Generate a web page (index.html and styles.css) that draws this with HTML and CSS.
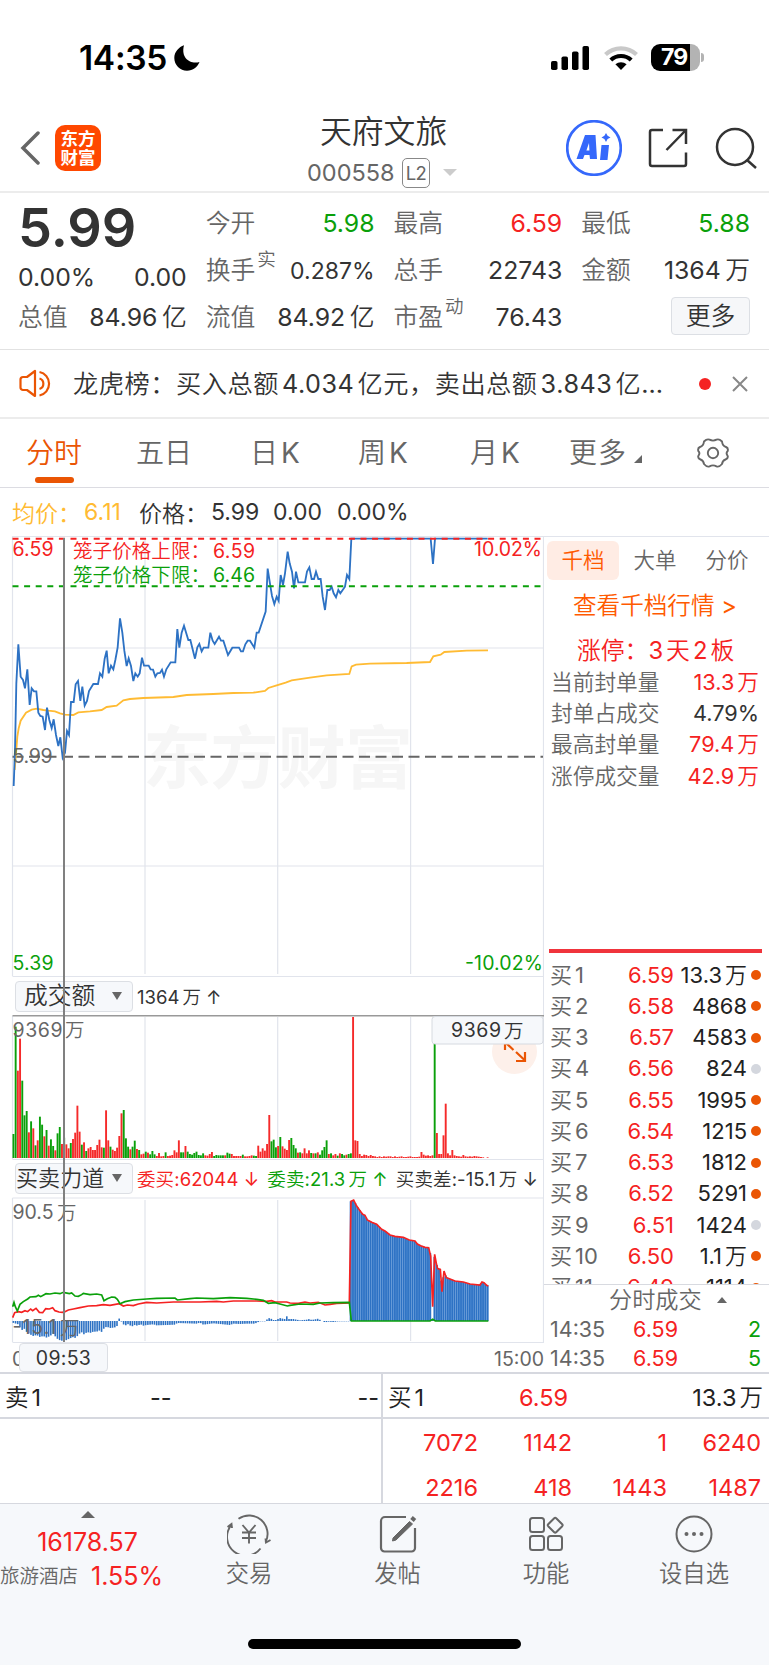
FILE: index.html
```html
<!DOCTYPE html>
<html lang="zh-CN">
<head>
<meta charset="utf-8">
<title>天府文旅 000558</title>
<link rel="stylesheet" href="styles.css">
</head>
<body>
<div class="phone">
  <div class="status">
    <span class="clock">14:35</span>
    <svg class="moon" width="26" height="26" viewBox="0 0 26 26"><path d="M10 0.3C5 2 .3 6.800.3 13 .3 20 6 25.700 13 25.700c6 0 10.500-3.500 12.500-8.700C17 19.500 6.500 14 10 .3z"/></svg>
    <svg class="signal" width="39" height="24" viewBox="0 0 39 24"><rect x="0" y="15" width="6.500" height="9" rx="1.800"/><rect x="10.500" y="10.500" width="6.500" height="13.500" rx="1.800"/><rect x="21" y="5.500" width="6.500" height="18.500" rx="1.800"/><rect x="31.500" y="0" width="6.500" height="24" rx="1.800"/></svg>
    <svg class="wifi" width="34" height="24" viewBox="0 0 34 24"><path d="M1.500 8.500a22.500 22.500 0 0 1 31 0" fill="none" stroke="#c9c9c9" stroke-width="4.200"/><path d="M6.800 14a15 15 0 0 1 20.400 0" fill="none" stroke="#000" stroke-width="4.200"/><path d="M17 24l-5.600-5.700a8.500 8.500 0 0 1 11.200 0z"/></svg>
    <div class="battery"><span>79</span></div><i class="nub"></i>
  </div>

  <header class="header">
    <svg class="back" width="20" height="34" viewBox="0 0 20 34"><path d="M18 2L3 17l15 15" fill="none" stroke="#666" stroke-width="3.500" stroke-linecap="round"/></svg>
    <div class="logo">东方<br>财富</div>
    <div class="title">
      <h1>天府文旅</h1>
      <p><span>000558</span><em>L2</em><i></i></p>
    </div>
    <svg class="ai" width="56" height="56" viewBox="0 0 56 56"><circle cx="28" cy="28" r="26.800" fill="none" stroke="#3568fb" stroke-width="2.700"/><path fill="#3568fb" fill-rule="evenodd" d="M19 15h10.500l1.500 24h-7l-.5-4h-5L17 39h-6.500zM23 23l-2.600 7.500h3zM35.500 25H43l-1.500 15h-7.500zM40 13l1.600 2.800L44.500 17.500l-2.900 1.600L40 22l-1.600-2.900-2.900-1.600 2.900-1.700z"/></svg>
    <svg class="share" width="40" height="40" viewBox="0 0 40 40" fill="none" stroke="#333" stroke-width="2.500"><path d="M15 2H4a2 2 0 0 0-2 2v32a2 2 0 0 0 2 2h32a2 2 0 0 0 2-2V24.500M24.500 2H38v14M37 3L18.500 22"/></svg>
    <svg class="search" width="42" height="42" viewBox="0 0 42 42" fill="none" stroke="#333" stroke-width="2.500"><circle cx="20" cy="20" r="18"/><path d="M32 33l9 8"/></svg>
  </header>

  <section class="quote">
    <div class="col first">
      <div class="price">5.99</div>
      <div class="row up"><span>0.00%</span><span>0.00</span></div>
      <div class="row"><label>总值</label><span>84.96<u>亿</u></span></div>
    </div>
    <div class="col">
      <div class="row"><label>今开</label><span class="green">5.98</span></div>
      <div class="row"><label>换手<sup>实</sup></label><span class="narrow">0.287%</span></div>
      <div class="row"><label>流值</label><span>84.92<u>亿</u></span></div>
    </div>
    <div class="col">
      <div class="row"><label>最高</label><span class="red">6.59</span></div>
      <div class="row"><label>总手</label><span>22743</span></div>
      <div class="row"><label>市盈<sup>动</sup></label><span>76.43</span></div>
    </div>
    <div class="col">
      <div class="row"><label>最低</label><span class="green">5.88</span></div>
      <div class="row"><label>金额</label><span>1364<u>万</u></span></div>
      <div class="row end"><button>更多</button></div>
    </div>
  </section>

  <section class="news">
    <svg width="34" height="30" viewBox="0 0 34 30" fill="none" stroke="#ea5504" stroke-width="2.200" stroke-linejoin="round"><path d="M4 8h4l8-6v25l-8-6H4a2.500 2.500 0 0 1-2.500-2.500v-8A2.500 2.500 0 0 1 4 8z"/><path d="M20.500 9.500a5.500 5.500 0 0 1 0 10.500M20.500 3a12 12 0 0 1 0 23.500"/></svg>
    <p>龙虎榜：买入总额<u></u>4.034<u>亿</u>元，卖出总额<u></u>3.843<u>亿</u>…</p>
    <i class="dot"></i>
    <svg class="close" width="16" height="16" viewBox="0 0 16 16"><path d="M1 1l14 14M15 1L1 15" stroke="#888" stroke-width="2"/></svg>
  </section>

  <nav class="tabs">
    <a class="on">分时</a><a>五日</a><a>日<u>K</u></a><a>周<u>K</u></a><a>月<u>K</u></a><a class="more">更多<i></i></a>
    <svg width="32" height="30" viewBox="-16 -15 32 30" fill="none" stroke="#666" stroke-width="1.900" stroke-linejoin="round"><circle r="5.200"/><path d="M-9-11.500Q-6-14.500-3.500-13.300Q0-11.400 3.500-13.300Q6-14.500 9-11.500Q9.500-7 13-6Q15.500-5 14.700-2Q12.500 0 14.700 3Q15.300 5.500 12.500 6.500Q9.500 7.500 9 11Q6 14.500 3.500 13.300Q0 11.400-3.500 13.300Q-6 14.500-9 11Q-9.500 7.500-12.500 6.500Q-15.300 5.500-14.700 3Q-12.500 0-14.700-2Q-15.500-5-13-6Q-9.500-7-9-11.500z"/></svg>
  </nav>

  <div class="legend"><span class="avg">均价：</span><span class="avg v1">6.11</span><span class="v2">价格：</span><span class="v3">5.99</span><span class="v4">0.00</span><span>0.00%</span></div>

  <main class="market">
    <div class="charts">
      <svg class="c-price" width="544" height="441" viewBox="0 536 544 441">
        <text class="mark" x="143" y="783" textLength="270">东方财富</text>
        <path class="grid" d="M12.500 536.500H544M12.500 648H544M12.500 866H544M12.500 976.500H544M12.500 536V976M145 539V974M277.700 539V974M410.600 539V974M543.500 536V977"/>
        <path d="M12.500 756.800H543" stroke="#666" stroke-width="2" stroke-dasharray="11 5.500"/>
        <g transform="translate(0 400) scale(.33333)" fill="none">
          <path stroke="#ffbb33" stroke-width="5.500" d="M44 1110L48 1060 52 1010 56 985 62 962 78 938 95 929 110 926 130 930 145 932 165 934 180 940 195 944 220 945 235 937 270 934 305 930 320 921 350 917 370 901 390 897 430 894 520 891 560 885 640 882 700 879 760 878 795 873 805 864 830 856 857 848 875 841 930 833 980 826 1048 822 1055 799 1068 794 1110 791 1220 789 1290 786 1300 769 1322 764 1333 756 1400 752 1464 751"/>
          <path stroke="#2d72c4" stroke-width="5.500" d="M41 1158L45 1050 49 850 55 733 62 830 69 840 75 865 82 808 89 915 95 865 102 874 109 874 115 938 121 948 128 950 135 990 141 923 148 960 155 984 161 958 168 1005 175 1038 181 1012 188 1073 195 1058 201 993 207 1005 213 906 221 906 227 853 234 843 241 903 247 860 254 917 261 903 267 873 280 852 294 852 300 820 307 830 314 776 320 752 326 820 333 797 340 808 346 780 353 742 360 655 367 698 373 752 380 798 386 775 393 798 400 843 406 820 413 830 419 820 426 773 432 797 446 797 452 808 459 809 466 830 472 820 480 819 486 809 492 830 499 808 512 787 526 787 532 687 538 743 545 698 552 677 565 720 571 720 585 776 592 742 598 732 605 754 611 743 625 743 631 698 638 722 644 732 657 710 663 722 670 722 684 765 697 743 717 743 723 754 729 754 736 733 743 722 750 722 763 743 770 698 776 698 797 635 803 506 809 545 816 588 823 612 830 590 836 603 842 525 849 555 855 520 863 455 869 490 876 515 882 565 888 515 895 547 915 547 921 515 928 502 935 537 942 537 948 515 955 537 962 537 968 590 975 630 982 570 989 570 995 560 1001 580 1008 592 1015 570 1021 580 1035 560 1041 525 1048 537 1054 416 1292 416 1299 492 1305 416 1463 416"/>
        </g>
        <path d="M12.500 538.800H543" stroke="#f52222" stroke-width="2" stroke-dasharray="6 5.600"/>
        <path d="M12.500 586.300H543" stroke="#0aa00a" stroke-width="2" stroke-dasharray="6 5.600"/>
        <g class="lab">
          <text class="r" x="12.500" y="556" textLength="41">6.59</text>
          <text class="r" x="73" y="557.500" textLength="137">笼子价格上限：</text><text class="r" x="213" y="558" textLength="42">6.59</text>
          <text class="g" x="73" y="582" textLength="137">笼子价格下限：</text><text class="g" x="213" y="582" textLength="42">6.46</text>
          <text class="r" x="474" y="556" textLength="68">10.02%</text>
          <text x="12.500" y="763" textLength="40">5.99</text>
          <text class="g" x="12.500" y="970" textLength="41">5.39</text>
          <text class="g" x="465" y="970" textLength="78">-10.02%</text>
        </g>
      </svg>
      <div class="bar bar1"><span class="pick">成交额<i></i></span><span class="dark">1364<u>万</u> ↑</span></div>
      <svg class="c-vol" width="544" height="145" viewBox="0 1015 544 145">
        <path class="grid" d="M12.500 1016V1159M145 1017V1158M277.700 1017V1158M410.600 1017V1158M543.500 1015V1160M12.500 1159.500H544"/>
        <path d="M12.500 1015.800H544" stroke="#999" stroke-width="1.600"/>
        <g id="volume"></g>
        <circle cx="514.500" cy="1051.500" r="22.500" fill="#fdf0ea"/>
        <path d="M505 1050v-8h8M505.500 1042.500l8 7.500M516 1052l8.500 8M525 1052v9h-9" fill="none" stroke="#ea5504" stroke-width="2.200"/>
        <g class="lab"><text x="12.500" y="1036.500" textLength="50">9369</text><text x="65" y="1037" font-size="18">万</text></g>
        <rect x="432" y="1016.500" width="111" height="27.500" rx="3" fill="#f6f8fb" stroke="#d6dae0"/>
        <g class="lab"><text class="d" x="451" y="1037" textLength="50">9369</text><text class="d" x="504" y="1038" font-size="18">万</text></g>
      </svg>
      <div class="bar bar2"><span class="pick tight">买卖力道<i></i></span><span class="red">委买:62044 ↓</span><span class="green">委卖:21.3<u>万</u> ↑</span><span class="dark">买卖差:-15.1<u>万</u> ↓</span></div>
      <svg class="c-force" width="544" height="146" viewBox="0 1197 544 146">
        <path class="grid" d="M12.500 1198V1342M145 1200V1341M277.700 1200V1341M410.600 1200V1341M543.500 1197V1343M12.500 1198H544M12.500 1342.500H544"/>
        <g id="force"></g>
        <g transform="translate(0 1160) scale(.33333)" fill="none" stroke-width="5">
          <path stroke="#f52222" d="M38 473L44 458 55 455 65 457 75 452 83 455 92 447 98 452 108 445 118 457 128 458 137 446 148 447 158 443 165 452 177 456 187 457 195 455 205 450 220 447 240 443 265 438 290 437 310 434 330 436 358 431 370 438 382 435 400 437 415 432 440 427 470 429 520 426 600 426 650 424 670 426 700 423 770 423 800 424 815 422 825 426 860 426 870 429 895 430 915 426 930 429 955 427 975 435 990 433 1010 430 1048 429 1053 124 1061 120 1070 138 1080 152 1088 163 1095 166 1102 180 1115 187 1130 193 1145 208 1155 213 1170 225 1185 229 1210 232 1228 240 1245 243 1252 252 1262 257 1275 262 1286 263 1292 288 1298 440 1304 283 1309 310 1313 326 1321 328 1326 395 1332 333 1339 353 1348 356 1365 363 1390 366 1410 372 1440 375 1446 366 1452 368 1460 376 1465 378"/>
          <path stroke="#0aa00a" d="M38 440L42 427 46 440 52 453 60 433 70 425 83 417 90 411 108 410 115 406 122 410 138 401 150 402 165 399 180 401 190 397 208 401 215 399 225 408 235 409 245 404 250 400 270 404 290 402 305 405 312 422 322 416 335 411 345 412 352 418 360 431 375 425 400 420 440 417 470 415 525 414 532 420 570 416 590 414 640 416 690 413 740 415 770 418 790 421 805 430 825 428 840 432 862 438 870 436 900 432 940 433 960 429 1000 428 1048 427 1054 483 1290 483 1298 478 1306 483 1465 483"/>
        </g>
        <g class="lab"><text x="12.500" y="1219" textLength="41">90.5</text><text x="57" y="1219.500" font-size="18">万</text><text x="12.500" y="1334" textLength="44">-15.1</text><text x="60" y="1335" font-size="18">万</text></g>
      </svg>
      <div class="axis"><span>09:30</span><span>15:00</span><b>09:53</b></div>
      <i class="cross"></i>
    </div>

    <aside class="side">
      <div class="stabs"><span class="on">千档</span><span>大单</span><span>分价</span></div>
      <div class="link">查看千档行情 &gt;</div>
      <div class="limit">涨停：3<u>天</u><u></u>2<u>板</u></div>
      <div class="stats">
        <div><label>当前封单量</label><span class="red">13.3<u>万</u></span></div>
        <div><label>封单占成交</label><span>4.79%</span></div>
        <div><label>最高封单量</label><span class="red">79.4<u>万</u></span></div>
        <div><label>涨停成交量</label><span class="red">42.9<u>万</u></span></div>
      </div>
      <div class="book">
        <div><label>买<u>1</u></label><span>6.59</span><span>13.3<u>万</u></span><i></i></div>
        <div><label>买<u>2</u></label><span>6.58</span><span>4868</span><i></i></div>
        <div><label>买<u>3</u></label><span>6.57</span><span>4583</span><i></i></div>
        <div><label>买<u>4</u></label><span>6.56</span><span>824</span><i class="off"></i></div>
        <div><label>买<u>5</u></label><span>6.55</span><span>1995</span><i></i></div>
        <div><label>买<u>6</u></label><span>6.54</span><span>1215</span><i></i></div>
        <div><label>买<u>7</u></label><span>6.53</span><span>1812</span><i></i></div>
        <div><label>买<u>8</u></label><span>6.52</span><span>5291</span><i></i></div>
        <div><label>买<u>9</u></label><span>6.51</span><span>1424</span><i class="off"></i></div>
        <div><label>买<u>10</u></label><span>6.50</span><span>1.1<u>万</u></span><i></i></div>
        <div><label>买<u>11</u></label><span>6.49</span><span>1114</span><i></i></div>
      </div>
      <div class="ticks">
        <h3>分时成交<i></i></h3>
        <div><label>14:35</label><span>6.59</span><b>2</b></div>
        <div><label>14:35</label><span>6.59</span><b>5</b></div>
      </div>
    </aside>
  </main>

  <section class="queue">
    <div class="sell"><div class="head"><span>卖<u>1</u></span><span>--</span><span>--</span></div></div>
    <div class="buy">
      <div class="head"><span>买<u>1</u></span><span class="red">6.59</span><span>13.3<u>万</u></span></div>
      <div class="lots"><span>7072</span><span>1142</span><span>1</span><span>6240</span><span>2216</span><span>418</span><span>1443</span><span>1487</span></div>
    </div>
  </section>

  <footer class="footer">
    <div class="sector"><i></i><strong>16178.57</strong><p><span>旅游酒店</span><b>1.55%</b></p></div>
    <div class="item"><svg width="44" height="40" viewBox="-22 -20 44 40" fill="none" stroke="#666" stroke-width="1.900"><path d="M-10.500-15.200A18.500 18.500 0 0 1 16.500 8.500M11.500 14.500A18.500 18.500 0 0 1-18-8.500M-21.500-7l4-3 .5 4M21.500 6l-4.500 2.500-.5-4M-6.500-9L0-1.500 6.500-9M0-1.500V9.500M-7-1.500H7M-7 4H7"/></svg><span>交易</span></div>
    <div class="item"><svg width="40" height="40" viewBox="0 0 40 40" fill="none" stroke="#666" stroke-width="2.200"><path d="M28 3H7a4 4 0 0 0-4 4v27a3.500 3.500 0 0 0 3.500 3.500h27A3.500 3.500 0 0 0 37 34V14"/><path d="M31.500 7.500l3 2.500L18 26l-3.500 1L15 24z" fill="#666" stroke-width="1"/><path d="M34 6.500l2.500-3" stroke-width="4.500"/></svg><span>发帖</span></div>
    <div class="item"><svg width="38" height="38" viewBox="0 0 38 38" fill="none" stroke="#666" stroke-width="2"><rect x="3" y="3" width="14" height="14" rx="2.500"/><rect x="3" y="21" width="14" height="14" rx="2.500"/><rect x="21" y="21" width="14" height="14" rx="2.500"/><path d="M27.200 3.200a1.500 1.500 0 0 1 2 0l6 6a1.500 1.500 0 0 1 0 2l-6 6a1.500 1.500 0 0 1-2 0l-6-6a1.500 1.500 0 0 1 0-2z"/></svg><span>功能</span></div>
    <div class="item"><svg width="38" height="38" viewBox="0 0 38 38"><circle cx="19" cy="19" r="17.500" fill="none" stroke="#666" stroke-width="2"/><g fill="#666"><circle cx="11.500" cy="19" r="2"/><circle cx="19" cy="19" r="2"/><circle cx="26.500" cy="19" r="2"/></g></svg><span>设自选</span></div>
    <div class="home"></div>
  </footer>
</div>
<script src="chart.js"></script>
</body>
</html>
```

FILE: styles.css
```css
* { box-sizing: border-box; margin: 0; padding: 0; }
body { background: #fff; color: #333; font-family: Inter, "Noto Sans CJK SC DemiLight", "Noto Sans CJK SC", sans-serif; font-weight: 400; width: 769px; }
.phone { width: 769px; height: 1665px; display: flex; flex-direction: column; overflow: hidden; }
i, em { font-style: normal; }
u { text-decoration: none; margin-left: 3px; }
b { font-weight: inherit; }
.red { color: #f52222; }
.green { color: #0aa00a; }
.dark { color: #333; }
svg { display: block; flex: none; }

.status { height: 108px; padding: 7px 65px 0 79px; display: flex; align-items: center; color: #000; }
.clock { font-size: 33.500px; font-weight: 600; width: 95px; letter-spacing: -.3px; white-space: nowrap; }
.signal { margin-left: 351px; }
.wifi { margin-left: 14px; }
.battery { margin-left: 13px; width: 49px; height: 27px; border-radius: 9px; background: linear-gradient(90deg, #000 79%, #b3b3b3 79%); color: #fff; font-size: 23px; font-weight: 700; line-height: 27px; padding-left: 10px; letter-spacing: -1px; }
.nub { width: 3px; height: 9px; margin-left: 1px; border-radius: 0 3px 3px 0; background: #b3b3b3; }

.header { height: 85px; border-bottom: 2px solid #ececec; display: flex; align-items: center; padding: 0 12px 4px 20px; }
.logo { margin-left: 15px; width: 46px; height: 46px; border-radius: 10px; background: #ff4800; color: #fff; font-family: "Noto Sans CJK SC", sans-serif; font-weight: 700; font-size: 17.500px; line-height: 19px; text-align: center; padding-top: 3px; }
.title { margin-left: 206px; width: 151px; padding-top: 4px; }
.title h1 { font-size: 31.800px; font-weight: inherit; line-height: 42px; margin-left: 13px; white-space: nowrap; }
.title p { display: flex; align-items: center; color: #666; font-size: 23.500px; line-height: 32px; margin-top: 4px; height: 32px; }
.title p span { width: 95px; }
.title em { width: 28px; height: 30px; border: 1.500px solid #888; border-radius: 5px; font-size: 18.500px; line-height: 28px; text-align: center; letter-spacing: -.5px; }
.title i { margin-left: 13px; border: 7px solid transparent; border-top: 7px solid #ccc; border-bottom: 0; }
.ai { margin-left: 108px; }
.share { margin-left: 26px; }
.search { margin-left: 27px; }

.quote { height: 157px; border-bottom: 1.500px solid #e2e2e2; padding: 6px 19px 0 18px; display: grid; grid-template-columns: repeat(4, 1fr); column-gap: 19px; font-size: 24.800px; }
.quote u { margin-left: 4.500px; }
.col .row { height: 47px; display: flex; justify-content: space-between; align-items: center; line-height: 30px; white-space: nowrap; }
.col label { color: #666; }
.col sup { font-size: 18.500px; vertical-align: 13px; line-height: 0; margin-left: 2px; }
.price { font-size: 54px; font-weight: 600; line-height: 57px; height: 54px; letter-spacing: 0; }
.first .up { height: 40px; padding-top: 8px; padding-bottom: 0; }
.narrow { font-size: 23px; padding-top: 3px; }
.col .end { justify-content: flex-end; }
.quote button { width: 79px; height: 38px; border: 1.500px solid #dcdfe4; border-radius: 4px; background: #f6f7f9; font: inherit; color: #333; margin-top: -2px; }

.news { height: 69px; border-bottom: 2px solid #ececec; display: flex; align-items: center; padding: 0 21px 0 19px; }
.news p { margin-left: 20px; width: 627px; font-size: 25.200px; letter-spacing: .55px; white-space: nowrap; padding-bottom: 3px; }
.dot { width: 12px; height: 12px; border-radius: 50%; background: #f52222; }
.close { margin-left: 21px; }

.tabs { height: 69px; border-bottom: 1.500px solid #dcdce2; position: relative; display: flex; align-items: center; font-size: 28px; color: #666; padding: 0 0 0 26px; }
.tabs a { height: 68px; line-height: 69px; position: relative; white-space: nowrap; width: 110px; }
.tabs a:nth-child(2) { width: 114px; }
.tabs a:nth-child(3) { width: 108px; }
.tabs a:nth-child(4) { width: 112px; }
.tabs a:nth-child(5) { width: 99px; }
.tabs a:nth-child(6) { width: 128px; letter-spacing: 1px; }
.tabs .on { color: #ea5504; }
.tabs .on::after { content: ""; position: absolute; left: 9px; bottom: 4px; width: 39px; height: 6px; border-radius: 3px; background: #ea5504; }
.more i { display: inline-block; margin-left: 7px; border-left: 8px solid transparent; border-bottom: 8px solid #666; }

.legend { height: 48px; padding-left: 12px; display: flex; align-items: center; font-size: 23px; white-space: nowrap; }
.legend .avg { color: #ffbb33; width: 72px; }
.legend .v1 { width: 55px; }
.legend .v2 { width: 72px; }
.legend .v3 { width: 62px; }
.legend .v4 { width: 64px; }

.market { height: 836px; display: grid; grid-template-columns: 544px 225px; }
.charts { position: relative; display: flex; flex-direction: column; }
.grid { fill: none; stroke: #e1e4ec; stroke-width: 1.200; }
.mark { font-family: "Noto Sans CJK SC", sans-serif; font-size: 68px; font-weight: 700; fill: #f6f6f6; }
.lab text { fill: #666; font-size: 19.500px; }
.lab .r { fill: #f52222; }
.lab .g { fill: #0aa00a; }
.lab .d { fill: #333; }
.bar { display: flex; align-items: center; padding-left: 15px; font-size: 18.500px; white-space: nowrap; border-right: 1px solid #e1e4ec; }
.bar1 { height: 38px; }
.bar2 { height: 37px; padding-bottom: 1px; letter-spacing: .1px; }
.pick { width: 118px; height: 31px; margin-right: 4px; border: 1.500px solid #dcdfe4; border-radius: 4px; background: #f6f8fb; display: flex; align-items: center; justify-content: space-between; padding: 0 10px 0 8px; font-size: 23.800px; line-height: 28px; }
.tight { padding-left: 0; font-size: 22px; }
.pick i { border: 5px solid transparent; border-top: 8px solid #666; border-bottom: 0; }
.bar2 .green { margin: 0 8px; }
.axis { position: relative; height: 29px; display: flex; justify-content: space-between; align-items: center; padding-left: 12px; font-size: 19.500px; color: #666; padding-top: 3px; }
.axis b { position: absolute; left: 19px; top: 0; width: 89px; height: 29px; border: 1.500px solid #dcdfe4; border-radius: 4px; background: #f6f8fb; color: #333; text-align: center; line-height: 28px; letter-spacing: .3px; }
.cross { position: absolute; left: 63px; top: 2px; width: 2px; height: 804px; background: #808080; }

.side { display: flex; flex-direction: column; border-top: 1px solid #e1e4ec; }
.stabs { display: grid; grid-template-columns: 72px 72px 72px; margin: 4px 0 0 3px; height: 39px; line-height: 38px; font-size: 21.500px; color: #666; text-align: center; }
.stabs .on { background: #ffece4; border-radius: 6px; color: #ff5a00; }
.link { height: 52px; line-height: 52px; padding-left: 29px; color: #ff5a00; font-size: 23.600px; white-space: nowrap; }
.limit { height: 35px; line-height: 38px; padding-left: 33px; color: #f52222; font-size: 23.800px; white-space: nowrap; }
.stats { height: 286px; border-bottom: 4px solid #f0343c; margin: 0 7px 0 5px; padding: 0 3px 0 2px; font-size: 21.700px; }
.stats > div { height: 31.200px; line-height: 31px; display: flex; justify-content: space-between; white-space: nowrap; }
.stats label { color: #666; }
.book { height: 332px; overflow: hidden; padding: 6.500px 8px 0 6px; border-bottom: 1px solid #d8dae0; font-size: 22px; }
.book > div { height: 31.250px; line-height: 31.250px; display: grid; grid-template-columns: 64px 60px 73px 14px; align-items: center; white-space: nowrap; }
.book label { color: #666; }
.book span { color: #f52222; text-align: right; }
.book span + span { color: #222; }
.book i { width: 10px; height: 10px; border-radius: 50%; background: #ea5504; margin-left: 4px; }
.book .off { background: #d4d7de; }
.ticks { font-size: 21.500px; padding: 0 8px 0 6px; color: #666; }
.ticks h3 { font-size: 23.200px; font-weight: inherit; height: 30px; line-height: 32px; padding-left: 59px; display: flex; align-items: center; }
.ticks h3 i { margin-left: 15px; border: 5px solid transparent; border-bottom: 6px solid #666; border-top: 0; }
.ticks > div { height: 28.500px; line-height: 29px; display: grid; grid-template-columns: 69px 59px 1fr; }
.ticks span { color: #f52222; text-align: right; }
.ticks b { color: #0aa00a; text-align: right; }

.queue { height: 132px; display: grid; grid-template-columns: 383px 386px; border-top: 2px solid #d6d8df; border-bottom: 1px solid #d6d8df; font-size: 23.500px; color: #222; }
.sell { border-right: 2px solid #d6d8df; }
.head { height: 45px; line-height: 47px; border-bottom: 2px solid #d6d8df; display: grid; padding: 0 2px 0 5px; }
.sell .head { grid-template-columns: 145px 1fr 1fr; }
.buy .head { grid-template-columns: 131px 1fr 1fr; padding-right: 6px; }
.head span:last-child { text-align: right; }
.lots { display: grid; grid-template-columns: 95px 94px 95px 94px; height: 84px; grid-template-rows: 45px 45px; line-height: 48px; text-align: right; color: #f52222; }

.footer { flex: 1; background: #f6f8fb; position: relative; display: grid; grid-template-columns: 175px 148px 149px 148px 148px; align-content: start; color: #666; }
.sector { height: 100px; display: flex; flex-direction: column; align-items: center; }
.sector > i { margin-top: 7px; border: 7px solid transparent; border-bottom: 7px solid #666; border-top: 0; }
.sector strong { font-weight: inherit; font-size: 25px; line-height: 32px; color: #f52222; margin-top: 8px; }
.sector p { display: flex; align-items: center; width: 175px; font-size: 19.500px; line-height: 34px; margin-top: 1px; white-space: nowrap; }
.sector b { font-size: 25px; color: #f52222; margin-left: 13px; }
.item { display: flex; flex-direction: column; align-items: center; font-size: 23.300px; line-height: 30px; }
.item svg { height: 40px; margin: 10px 0 5px; }
.home { position: absolute; left: 248px; top: 135px; width: 273px; height: 10px; border-radius: 5px; background: #000; }
```

FILE: chart.js
```js
const NS = 'http://www.w3.org/2000/svg';
const LEFT = 12.5, PITCH = 2.2054;

function rect(parent, x, y, w, h, fill) {
  const r = document.createElementNS(NS, 'rect');
  r.setAttribute('x', x); r.setAttribute('y', y);
  r.setAttribute('width', w); r.setAttribute('height', h);
  r.setAttribute('fill', fill);
  parent.appendChild(r);
}

// Turnover per minute: direction letter followed by bar height in thirds of a pixel.
const volume = ('g72 g394 r262 r358 g232 g128 g141 r77 g110 r89 g38 r53 g124 g100 r65 g84 r37 g56 g36 r23 g74 g93 r42 g61 r41 r29 g45 r57 r76 r157 ' +
  'r79 g40 r47 g21 r29 r33 r24 r24 r39 r55 r32 g31 r143 r53 g34 r25 r21 r31 r66 r134 g144 g59 g34 r26 g34 g52 r27 g24 r11 r13 g19 r16 g11 g21 g11 r6 r15 r5 r6 g17 ' +
  'r6 r7 r9 r23 r17 r53 g17 g17 r36 g19 g12 g10 g15 g19 g9 g8 g14 r8 r7 r12 r18 g6 g9 g8 g8 g8 r8 g16 g13 r12 r6 r6 r6 r6 g10 r5 r5 r6 r8 g7 g6 r37 r19 r29 r22 r42 r129 ' +
  'g50 g55 g32 r36 g63 r35 r28 r24 r54 g60 g39 g29 r16 g17 r14 r29 r14 r23 g15 r14 g14 r17 g10 g23 g33 g53 r12 g14 r8 r12 g7 r14 g12 g8 r10 g12 g14 r423 r53 r51 r12 r6 ' +
  'r10 r9 r6 r9 r6 r5 r3 r5 r3 r5 r4 r5 r5 r3 r5 r3 r4 r5 r3 r3 r4 r5 r3 r3 r3 r4 r18 r10 r7 r8 r6 r8 g342 r75 r12 r12 r68 r163 r14 r8 r24 r8 r6 r5 r4 r9 r5 r4 r5 r4 r6 r5 r4 r3 r2 r0 r2').split(' ');
const volumeGroup = document.getElementById('volume');
volume.forEach((v, i) => {
  const h = +v.slice(1) / 3;
  rect(volumeGroup, LEFT + i * PITCH, 1158 - h, 1.9, h, v[0] === 'r' ? '#f52a2a' : '#0aa00a');
});

// Order imbalance, signed offset from the zero line as [x, height] in thirds of a pixel.
const force = [[38,5],[48,8],[55,10],[65,28],[72,22],[80,33],[90,40],[100,45],[110,42],[120,48],[130,45],[140,50],[150,45],[160,38],[170,52],[180,58],[190,60],[200,57],[210,52],[220,48],[228,52],[235,40],[245,34],[252,40],[262,33],[270,36],[280,32],[290,32],[300,28],[305,33],[312,22],[320,17],[330,21],[340,20],[350,18],[355,3],[358,-9],[362,-2],[368,8],[375,14],[385,9],[395,17],[403,12],[412,14],[422,10],[430,14],[440,12],[460,10],[470,13],[500,12],[525,11],[532,6],[590,8],[600,5],[610,11],[640,7],[690,12],[700,8],[720,9],[740,8],[765,8],[770,5],[780,1],[795,1],[800,-4],[810,-10],[818,-3],[830,-3],[838,-9],[845,-8],[853,-5],[862,-16],[867,-6],[880,-6],[900,-2],[920,-4],[928,-6],[935,-3],[945,-5],[955,-7],[962,-2],[975,4],[985,2],[1000,3],[1015,1],[1051,1],
[1052,-359],[1061,-363],[1070,-345],[1080,-331],[1088,-320],[1095,-317],[1102,-303],[1115,-296],[1130,-290],[1145,-275],[1155,-270],[1170,-258],[1185,-254],[1210,-251],[1228,-243],[1245,-240],[1252,-231],[1262,-226],[1275,-221],[1286,-220],[1293,-195],[1296,-3],[1301,-3],[1303,-195],[1309,-173],[1313,-157],[1321,-155],[1326,-88],[1332,-150],[1339,-130],[1348,-127],[1365,-120],[1390,-117],[1410,-111],[1440,-108],[1446,-117],[1452,-115],[1460,-107],[1467,-105]];
const forceGroup = document.getElementById('force');
const ZERO = 1321;
for (let i = 0; i < 216; i++) {
  const x = 40 + i * PITCH * 3;
  const k = force.findIndex(p => p[0] > x);
  if (k < 1) continue;
  const [x0, a] = force[k - 1], [x1, b] = force[k];
  const h = (a + (b - a) * (x - x0) / (x1 - x0)) / 3;
  if (h < -30) rect(forceGroup, x / 3 - 1.1, ZERO + h, 2.25, -h, '#5f96d8');
  rect(forceGroup, x / 3 - 0.8, h < 0 ? ZERO + h : ZERO, 1.6, Math.abs(h), '#2d72c4');
}
```
